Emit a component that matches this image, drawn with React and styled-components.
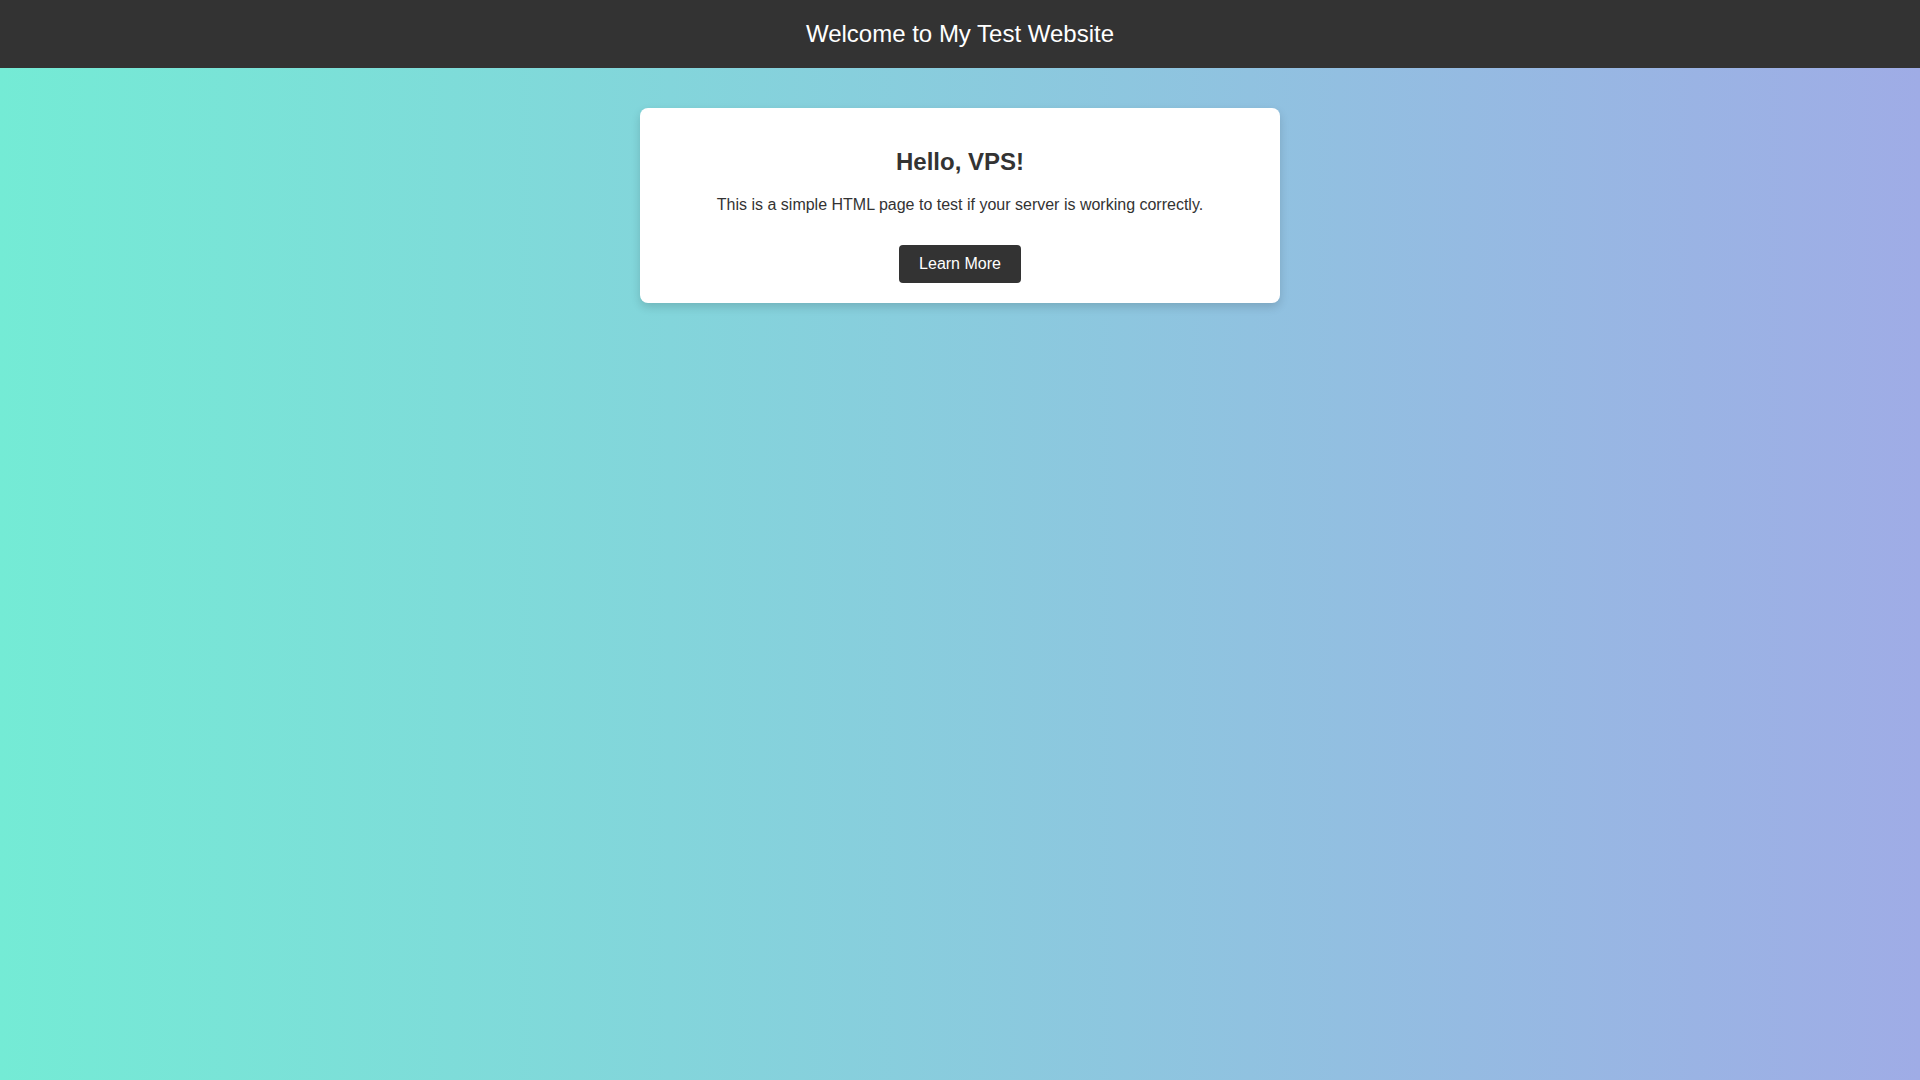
import React from "react";
import styled, { createGlobalStyle } from "styled-components";

const GlobalStyle = createGlobalStyle`
  html, body {
    margin: 0;
    padding: 0;
  }
  body {
    font-family: "Liberation Sans", Arial, sans-serif;
    background: linear-gradient(to right, #74ebd5, #9face6);
    min-height: 100vh;
    color: #333;
  }
`;

const Header = styled.header`
  background: #333;
  color: #fff;
  padding: 20px 0;
  text-align: center;
`;

const Title = styled.h1`
  margin: 0;
  font-size: 24px;
  font-weight: normal;
`;

const Card = styled.main`
  box-sizing: content-box;
  max-width: 600px;
  margin: 40px auto;
  padding: 20px;
  background: #fff;
  border-radius: 8px;
  box-shadow: 0 4px 10px rgba(0, 0, 0, 0.15);
  text-align: center;
`;

const Heading = styled.h2`
  margin: 20px 0;
  font-size: 24px;
  font-weight: bold;
  color: #333;
`;

const Text = styled.p`
  margin: 0 0 16px;
  font-size: 16px;
  color: #333;
`;

const Button = styled.a`
  display: inline-block;
  margin-top: 15px;
  padding: 10px 20px;
  background: #333;
  color: #fff;
  font-size: 16px;
  text-decoration: none;
  border-radius: 4px;
  cursor: pointer;
`;

export default function App() {
  return (
    <>
      <GlobalStyle />
      <Header>
        <Title>Welcome to My Test Website</Title>
      </Header>
      <Card>
        <Heading>Hello, VPS!</Heading>
        <Text>This is a simple HTML page to test if your server is working correctly.</Text>
        <Button href="#">Learn More</Button>
      </Card>
    </>
  );
}
